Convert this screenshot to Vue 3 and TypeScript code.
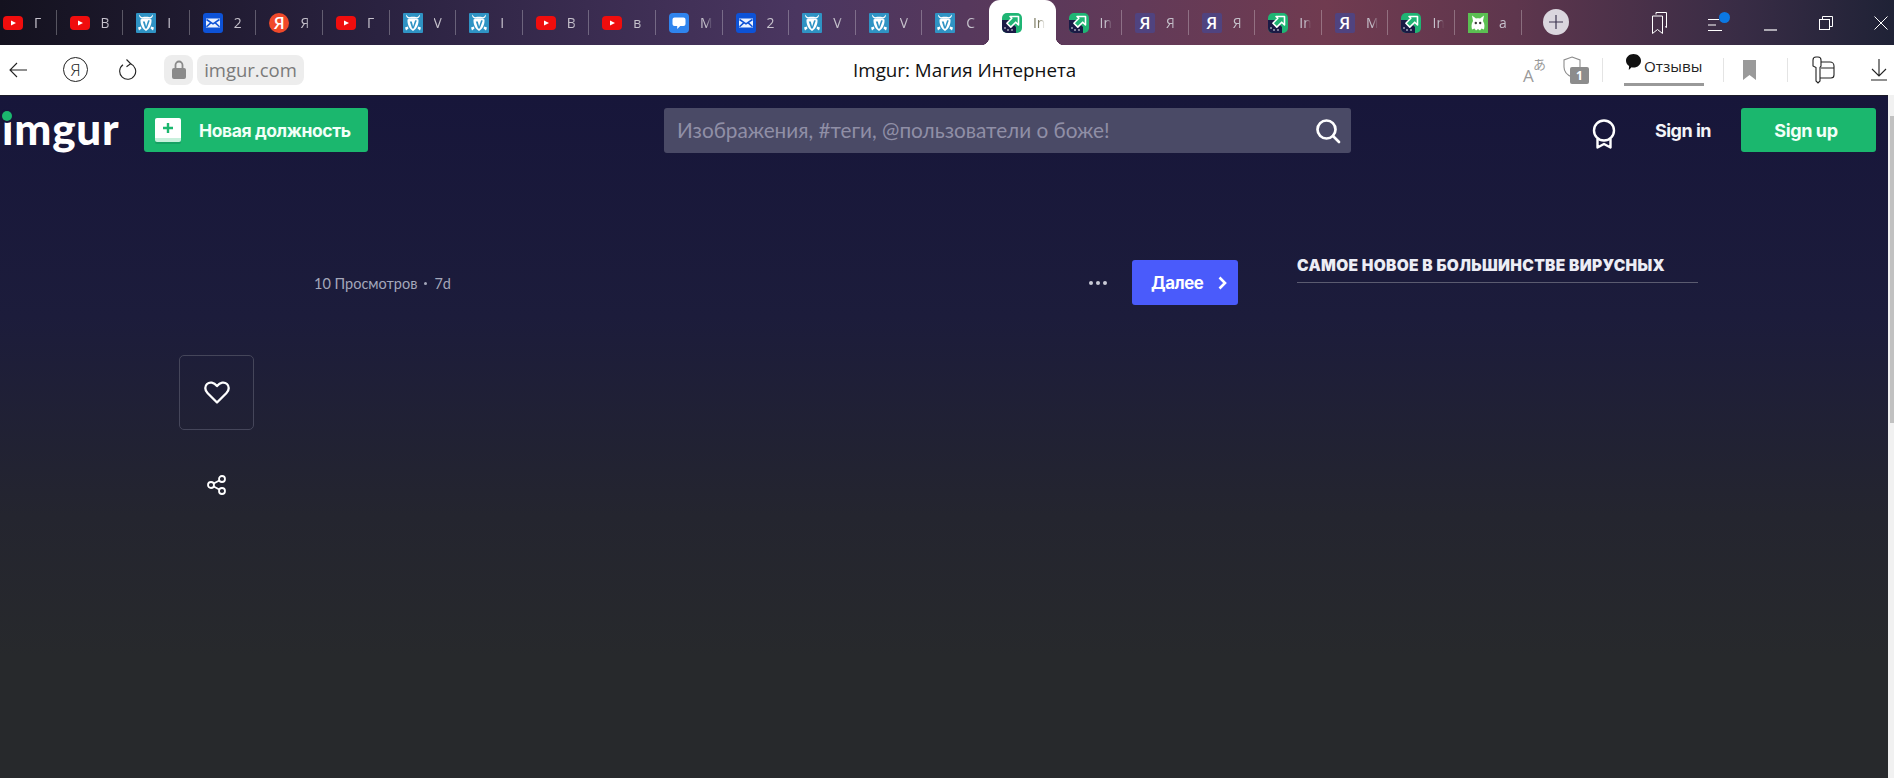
<template>
  <div class="window">
    <div class="tabbar">
      <div class="tabs">
        <div
          v-for="(tab, i) in tabs"
          :key="i"
          class="tab"
          :class="{ active: i === activeTab, 'no-sep': i === activeTab - 1 || i === activeTab }"
        >
          <svg v-if="tab.kind === 'yt'" class="fav" viewBox="0 0 20 20">
            <rect x="0" y="3" width="20" height="14" rx="4" fill="#f00d0d" />
            <path d="M8 7.4 13 10l-5 2.6z" fill="#fff" />
          </svg>
          <svg v-else-if="tab.kind === 'bull'" class="fav" viewBox="0 0 20 20">
            <rect width="20" height="20" rx="1" fill="#2f93c4" />
            <path d="M3 1.5c0 2.500 1 3.500 3 4.200 2.500-1 5.500-1 8 0 2-.7 3-1.700 3-4.200l-2 2.200c-.7.4-1.200.6-2 .4-1.300-.5-4.700-.5-6 0-.8.2-1.300 0-2-.4z" fill="#fff" />
            <path d="M4.500 6.500c3-1.600 8-1.600 11 0 .4 4.500-1.800 9.500-5.500 11.500-3.700-2-5.900-7-5.500-11.500z" fill="#fff" />
            <path d="M6.800 8.500h2l1.300 5 2-6.300 1.700.4-3 8h-1.700z" fill="#2f93c4" />
            <path d="M2 14.500l2.800-1 .7 2-2.500 2zM18 14.500l-2.800-1-.7 2 2.500 2z" fill="#fff" />
          </svg>
          <svg v-else-if="tab.kind === 'mail'" class="fav" viewBox="0 0 20 20">
            <rect width="20" height="20" rx="3" fill="#0d52d6" />
            <rect x="3" y="5.500" width="14" height="9" fill="#e9f1ff" />
            <path d="M3.500 6.500 10 10.800l6.500-4.300M3.500 13.800 8 9.600M16.500 13.800 12 9.600" fill="none" stroke="#0d52d6" stroke-width="1.500" />
          </svg>
          <span v-else-if="tab.kind === 'ya'" class="fav ya-round">Я</span>
          <span v-else-if="tab.kind === 'yaq'" class="fav ya-square">Я</span>
          <svg v-else-if="tab.kind === 'msg'" class="fav" viewBox="0 0 20 20">
            <rect width="20" height="20" rx="4" fill="#2f84ee" />
            <path d="M5.500 4.500h9a2 2 0 0 1 2 2v4.500a2 2 0 0 1-2 2h-3.300l-3 3v-3H5.500a2 2 0 0 1-2-2V6.500a2 2 0 0 1 2-2z" fill="#fff" />
          </svg>
          <svg v-else-if="tab.kind === 'imgur'" class="fav" viewBox="0 0 20 20">
            <rect width="20" height="20" rx="5" fill="#1fb574" />
            <path d="M0 7 7 7 14 14 14 20H5a5 5 0 0 1-5-5z" fill="#1a1a45" />
            <path d="M8 3.500h8.500V12l-2.800-2.800-4.900 4.900-3.900-3.900 4.900-4.900z" fill="#1fb574" stroke="#fff" stroke-width="1.600" stroke-linejoin="round" />
            <circle cx="3" cy="15" r=".8" fill="#fff" />
            <circle cx="6" cy="17" r=".8" fill="#fff" />
            <circle cx="10" cy="17" r=".8" fill="#fff" />
          </svg>
          <svg v-else class="fav" viewBox="0 0 20 20">
            <rect width="20" height="20" fill="#5bbf52" />
            <path d="M5 8 4 2.500 8 5.500c1.300-.4 2.700-.4 4 0l4-3L15 8c2 3 1.500 6 1 8.500l-2.500-1-1.500 2-2-1.500-2 1.500-1.500-2-2.500 1C3.500 14 3 11 5 8z" fill="#fff" />
            <circle cx="7.800" cy="10" r="1.200" fill="#3a3a3a" />
            <circle cx="12.200" cy="10" r="1.200" fill="#3a3a3a" />
          </svg>
          <span class="tab-label">{{ tab.label }}</span>
        </div>
      </div>

      <button class="new-tab">
        <svg width="16" height="16" viewBox="0 0 16 16"><path d="M8 1v14M1 8h14" stroke="#3c3550" stroke-width="1.200" /></svg>
      </button>

      <div class="win-controls">
        <svg class="ctl-collections" width="17" height="24" viewBox="0 0 17 24" fill="none" stroke="#fff" stroke-width="1">
          <path d="M5 3.500V1.500h10.500v15L14 15.500" />
          <path d="M1.500 5h10v17.500l-5-4-5 4z" />
        </svg>
        <div class="ctl-menu">
          <svg width="16" height="14" viewBox="0 0 16 14" stroke="#fff" stroke-width="1"><path d="M0 1.500h11M0 7h8M0 12.500h14" /></svg>
          <span class="menu-dot"></span>
        </div>
        <svg class="ctl-min" width="13" height="10" viewBox="0 0 13 10" stroke="#fff" stroke-width="1.200"><path d="M0 9h13" /></svg>
        <svg class="ctl-restore" width="14" height="14" viewBox="0 0 14 14" fill="none" stroke="#fff" stroke-width="1">
          <path d="M3.500 3V.5h10v10H11" />
          <rect x=".5" y="3.500" width="10" height="10" />
        </svg>
        <svg class="ctl-close" width="14" height="14" viewBox="0 0 14 14" stroke="#fff" stroke-width="1"><path d="M.5.5l13 13M13.500.5l-13 13" /></svg>
      </div>
    </div>

    <div class="toolbar">
      <svg class="tb-back" width="18" height="16" viewBox="0 0 18 16" fill="none" stroke="#222" stroke-width="1.100"><path d="M18 8H1M8 1 1 8l7 7" /></svg>
      <span class="tb-ya">Я</span>
      <svg class="tb-reload" width="18" height="24" viewBox="0 0 18 24" fill="none" stroke="#222" stroke-width="1.100">
        <path d="M11.500 5.800a8 8 0 1 1-7.500 1" />
        <path d="M7.500 1.500l4.200 4.300-4.200 3" />
      </svg>
      <div class="lock-pill">
        <svg width="14" height="19" viewBox="0 0 14 19"><path d="M3.500 8V5a3.500 3.500 0 0 1 7 0v3" fill="none" stroke="#8a8a8a" stroke-width="1.800" /><rect y="8" width="14" height="11" rx="2" fill="#8a8a8a" /></svg>
      </div>
      <div class="url-pill">imgur.com</div>
      <div class="page-title">Imgur: Магия Интернета</div>

      <div class="tb-right">
        <div class="translate"><span class="tr-a">A</span><span class="tr-jp">あ</span></div>
        <div class="shield">
          <svg width="18" height="24" viewBox="0 0 18 24" fill="none" stroke="#8c8c8c" stroke-width="1.100"><path d="M9 1l8 3v7c0 4-3 8-8 10-5-2-8-6-8-10V4z" /></svg>
          <span class="shield-badge">1</span>
        </div>
        <span class="tb-sep sep-a"></span>
        <div class="reviews">
          <svg width="15" height="17" viewBox="0 0 15 17"><path d="M7.500 0C11.700 0 15 2.900 15 6.700c0 3.800-3.300 6.800-7.500 6.800-.7 0-1.300-.1-1.900-.2L2.800 16l.3-4C1.200 10.800 0 8.900 0 6.700 0 2.900 3.300 0 7.500 0z" fill="#111" /></svg>
          <span>Отзывы</span>
        </div>
        <span class="tb-sep sep-b"></span>
        <svg class="tb-mark" width="13" height="20" viewBox="0 0 13 20"><path d="M0 0h13v20l-6.500-5L0 20z" fill="#9a9a9a" /></svg>
        <span class="tb-sep sep-c"></span>
        <svg class="tb-key" width="23" height="28" viewBox="0 0 23 28" fill="none" stroke="#222" stroke-width="1.100">
          <path d="M1 4a3 3 0 0 1 3-3h2a3 3 0 0 1 3 3v6l-1 1.500V25l-2 2-2-2V11.500L1 10z" />
          <path d="M9 6h9a4 4 0 0 1 4 4v9a3 3 0 0 1-3 3H8M9 12h13" />
        </svg>
        <svg class="tb-down" width="16" height="22" viewBox="0 0 16 22" fill="none" stroke="#222" stroke-width="1.100"><path d="M8 0v17M1 10l7 7 7-7M0 21h16" /></svg>
      </div>
    </div>

    <div class="viewport">
      <div class="page">
        <header class="nav">
          <div class="logo">imgur<span class="logo-dot"></span></div>
          <button class="new-post">
            <span class="plus-box">
              <svg width="10" height="10" viewBox="0 0 10 10"><path d="M5 0v10M0 5h10" stroke="#1bb76e" stroke-width="2.400" /></svg>
            </span>
            Новая должность
          </button>
          <div class="search">
            <span class="search-text">Изображения, #теги, @пользователи о боже!</span>
            <svg width="26" height="26" viewBox="0 0 26 26" fill="none" stroke="#fff" stroke-width="2.700" stroke-linecap="round"><circle cx="11.500" cy="11.500" r="9" /><path d="M18 18l6 6" /></svg>
          </div>
          <div class="nav-right">
            <svg width="24" height="30" viewBox="0 0 24 30" fill="none" stroke="#fff" stroke-width="2.400" stroke-linejoin="round">
              <circle cx="12" cy="11.500" r="10" />
              <path d="M5.500 20v8.500l6.500-3.500 6.500 3.500V20" />
            </svg>
            <span class="sign-in">Sign in</span>
            <button class="sign-up">Sign up</button>
          </div>
        </header>

        <main class="content">
          <aside class="rail">
            <div class="like">
              <svg width="26" height="23" viewBox="0 0 26 23" fill="none" stroke="#fff" stroke-width="2.300" stroke-linejoin="round"><path d="M13 21.500 3.500 12C.5 9 .8 5 3 3c2.600-2.300 6.800-1.800 10 2 3.200-3.800 7.400-4.300 10-2 2.200 2 2.500 6 -.5 9z" /></svg>
            </div>
            <svg class="share" width="19" height="20" viewBox="0 0 19 20" fill="none" stroke="#fff" stroke-width="1.800"><circle cx="4" cy="10" r="3" /><circle cx="15" cy="4" r="3" /><circle cx="15" cy="16" r="3" /><path d="M6.700 8.500l5.600-3M6.700 11.500l5.600 3" /></svg>
          </aside>

          <section class="post-head">
            <div class="meta">
              <span>10 Просмотров</span>
              <span class="meta-dot"></span>
              <span>7d</span>
            </div>
            <div class="post-actions">
              <span class="more"><i></i><i></i><i></i></span>
              <button class="next">
                Далее
                <svg width="9" height="14" viewBox="0 0 9 14" fill="none" stroke="#fff" stroke-width="2.600"><path d="M1.500 1.500 7 7l-5.500 5.500" /></svg>
              </button>
            </div>
          </section>

          <aside class="side">
            <h2>Самое новое в большинстве вирусных</h2>
          </aside>
        </main>
      </div>
      <div class="scrollbar"><div class="thumb"></div></div>
    </div>
  </div>
</template>

<script setup lang="ts">
type TabKind = 'yt' | 'bull' | 'mail' | 'ya' | 'yaq' | 'msg' | 'imgur' | 'pet'

interface Tab {
  kind: TabKind
  label: string
}

const activeTab = 15

const tabs: Tab[] = [
  { kind: 'yt', label: 'Г' },
  { kind: 'yt', label: 'В' },
  { kind: 'bull', label: 'I' },
  { kind: 'mail', label: '2' },
  { kind: 'ya', label: 'Я' },
  { kind: 'yt', label: 'Г' },
  { kind: 'bull', label: 'V' },
  { kind: 'bull', label: 'I' },
  { kind: 'yt', label: 'В' },
  { kind: 'yt', label: 'в' },
  { kind: 'msg', label: 'М' },
  { kind: 'mail', label: '2' },
  { kind: 'bull', label: 'V' },
  { kind: 'bull', label: 'V' },
  { kind: 'bull', label: 'С' },
  { kind: 'imgur', label: 'In' },
  { kind: 'imgur', label: 'In' },
  { kind: 'yaq', label: 'Я' },
  { kind: 'yaq', label: 'Я' },
  { kind: 'imgur', label: 'In' },
  { kind: 'yaq', label: 'М' },
  { kind: 'imgur', label: 'In' },
  { kind: 'pet', label: 'а' },
]
</script>

<style>
html,
body {
  margin: 0;
  overflow: hidden;
}
</style>

<style scoped>
.window {
  width: 1894px;
  height: 778px;
  display: flex;
  flex-direction: column;
  overflow: hidden;
  font-family: "Open Sans", sans-serif;
}

button {
  border: 0;
  font: inherit;
  padding: 0;
}

/* tab strip */
.tabbar {
  height: 45px;
  flex: none;
  display: flex;
  align-items: center;
  background: linear-gradient(90deg, #14121f 0%, #2a2240 20%, #4a3660 42%, #623a58 60%, #703b50 70%, #5e364d 80%, #382c45 92%, #1f2236 100%);
}

.tabs {
  display: flex;
  height: 45px;
  margin-left: -10px;
  flex: none;
}

.tab {
  width: 66.6px;
  height: 45px;
  box-sizing: border-box;
  padding-left: 13px;
  display: flex;
  align-items: center;
  gap: 11px;
  position: relative;
  flex: none;
}

.tab::after {
  content: "";
  position: absolute;
  right: 0;
  top: 10px;
  height: 25px;
  width: 1px;
  background: rgba(255, 255, 255, 0.28);
}

.tab.no-sep::after {
  display: none;
}

.tab.active {
  background: #fff;
  border-radius: 11px 11px 0 0;
}

.tab.active .tab-label {
  color: #7c7a62;
}

.tab.active::before {
  content: "";
  position: absolute;
  left: -8px;
  right: -8px;
  bottom: 0;
  height: 8px;
  background:
    radial-gradient(circle at 0 0, transparent 8px, #fff 8.500px) left / 8px 8px no-repeat,
    radial-gradient(circle at 100% 0, transparent 8px, #fff 8.500px) right / 8px 8px no-repeat;
}

.fav {
  width: 20px;
  height: 20px;
  flex: none;
  display: block;
}

.ya-round,
.ya-square {
  color: #fff;
  font-size: 17px;
  font-weight: 600;
  line-height: 20px;
  text-align: center;
}

.ya-round {
  background: #f0492a;
  border-radius: 50%;
}

.ya-square {
  background: #50437f;
  border-radius: 2px;
}

.tab-label {
  width: 12px;
  overflow: hidden;
  white-space: nowrap;
  font-size: 14px;
  color: #c6c2cc;
  -webkit-mask-image: linear-gradient(90deg, #000 50%, transparent 100%);
  mask-image: linear-gradient(90deg, #000 50%, transparent 100%);
}

.new-tab {
  width: 26px;
  height: 26px;
  margin: 0 0 2px 21px;
  border-radius: 50%;
  background: #dad6de;
  display: flex;
  align-items: center;
  justify-content: center;
  flex: none;
}

.win-controls {
  display: flex;
  align-items: center;
  flex: none;
}

.ctl-collections {
  margin-left: 82px;
}

.ctl-menu {
  margin-left: 40px;
  width: 24px;
  height: 24px;
  position: relative;
  display: flex;
  align-items: center;
}

.ctl-menu svg {
  margin-top: 4px;
}

.menu-dot {
  position: absolute;
  left: 11px;
  top: 1px;
  width: 11px;
  height: 11px;
  border-radius: 50%;
  background: #0b78e3;
}

.ctl-min {
  margin: 6px 0 0 32px;
}

.ctl-restore {
  margin: 0 0 0 42px;
}

.ctl-close {
  margin-left: 41px;
}

/* address bar */
.toolbar {
  height: 50px;
  flex: none;
  background: #fff;
  display: flex;
  align-items: center;
  padding-bottom: 1px;
  box-sizing: border-box;
}

.tb-back {
  margin-left: 9px;
}

.tb-ya {
  width: 23px;
  height: 23px;
  margin-left: 36px;
  border: 1.200px solid #222;
  border-radius: 50%;
  font-size: 17px;
  font-weight: 300;
  line-height: 23px;
  text-align: center;
  color: #222;
}

.tb-reload {
  margin-left: 31px;
}

.lock-pill {
  width: 29px;
  height: 30px;
  margin-left: 27px;
  background: #ededed;
  border-radius: 8px;
  display: flex;
  align-items: center;
  justify-content: center;
}

.url-pill {
  width: 107px;
  height: 30px;
  margin-left: 4px;
  background: #ededed;
  border-radius: 8px;
  font-size: 18.500px;
  line-height: 29px;
  color: #7a7a7a;
  text-align: center;
  flex: none;
}

.page-title {
  margin-left: 549px;
  font-size: 18.800px;
  color: #111;
  white-space: nowrap;
}

.tb-right {
  margin-left: auto;
  display: flex;
  align-items: center;
  padding-right: 7px;
}

.translate {
  width: 23px;
  height: 28px;
  display: flex;
  justify-content: space-between;
  color: #9a9a9a;
}

.tr-a {
  font-size: 17px;
  line-height: 17px;
  align-self: flex-end;
}

.tr-jp {
  font-family: "Noto Sans CJK JP", sans-serif;
  font-size: 13px;
  line-height: 15px;
  margin-left: -2px;
}

.shield {
  position: relative;
  margin-left: 17px;
  width: 26px;
  height: 28px;
}

.shield-badge {
  position: absolute;
  right: 0;
  bottom: 0;
  width: 19px;
  height: 17px;
  background: #8c8c8c;
  border-radius: 2px;
  color: #fff;
  font-size: 12px;
  font-weight: 700;
  line-height: 17px;
  text-align: center;
}

.tb-sep {
  width: 1px;
  height: 24px;
  background: #e4e4e4;
}

.sep-a {
  margin-left: 13px;
}

.reviews {
  margin-left: 21px;
  width: 80px;
  height: 32px;
  box-sizing: border-box;
  padding-left: 2px;
  border-bottom: 3px solid #999;
  display: flex;
  gap: 3px;
  font-size: 15.200px;
  color: #222;
  line-height: 24px;
}

.sep-b {
  margin-left: 19px;
}

.tb-mark {
  margin-left: 19px;
}

.sep-c {
  margin-left: 31px;
}

.tb-key {
  margin-left: 24px;
}

.tb-down {
  margin-left: 36px;
}

/* page */
.viewport {
  flex: 1;
  display: flex;
  min-height: 0;
}

.page {
  flex: 1;
  background: linear-gradient(180deg, #17163a 0, #1c1c3b 220px, #24252f 420px, #27292c 560px);
  border-top: 1px solid #1c1b28;
  box-sizing: border-box;
}

.scrollbar {
  width: 6px;
  flex: none;
  background: #f1f1f1;
  padding: 21px 0 0 2px;
  box-sizing: border-box;
}

.thumb {
  height: 307px;
  background: #c1c1c1;
}

.nav {
  display: flex;
  align-items: flex-start;
  padding: 12px 12px 0 2px;
}

.logo {
  position: relative;
  width: 122px;
  height: 44px;
  font-family: Lato, sans-serif;
  font-weight: 900;
  font-size: 44px;
  line-height: 40px;
  letter-spacing: 0.8px;
  color: #fff;
}

.logo-dot {
  position: absolute;
  left: 0;
  top: 3px;
  width: 10px;
  height: 10px;
  border-radius: 50%;
  background: #1bb76e;
  box-shadow: 0 0 0 2px #17163a;
}

.new-post {
  width: 224px;
  height: 44px;
  margin-left: 20px;
  box-sizing: border-box;
  padding-left: 11px;
  display: flex;
  align-items: center;
  gap: 18px;
  background: #1bb76e;
  border-radius: 3px;
  color: #f2fff8;
  font-family: Inter, sans-serif;
  font-weight: 700;
  font-size: 17.500px;
  letter-spacing: -0.4px;
  white-space: nowrap;
}

.plus-box {
  width: 26px;
  height: 24px;
  background: #fff;
  border-bottom: 4px solid #c8f0dc;
  box-sizing: border-box;
  border-radius: 2px;
  display: flex;
  align-items: center;
  justify-content: center;
  box-shadow: 0 2px 0 #17a163;
}

.search {
  width: 687px;
  height: 45px;
  margin-left: 296px;
  box-sizing: border-box;
  padding: 0 10px 0 13px;
  display: flex;
  align-items: center;
  justify-content: space-between;
  background: #4a4a66;
  border-radius: 3px;
}

.search-text {
  font-family: Lato, sans-serif;
  font-size: 20.750px;
  line-height: 22px;
  margin-top: -2px;
  color: #908fa6;
  white-space: nowrap;
}

.nav-right {
  margin-left: auto;
  display: flex;
  align-items: center;
  height: 44px;
}

.nav-right > svg {
  margin: 7px 0 0 0;
}

.sign-in {
  margin-left: 39px;
  font-family: Inter, sans-serif;
  font-weight: 700;
  font-size: 18px;
  letter-spacing: -0.5px;
  color: #f4f4f8;
  white-space: nowrap;
}

.sign-up {
  width: 135px;
  height: 44px;
  margin-left: 30px;
  padding-right: 5px;
  background: #1bb76e;
  border-radius: 3px;
  color: #f2fff8;
  font-family: Inter, sans-serif;
  font-weight: 700;
  font-size: 18px;
  letter-spacing: -0.4px;
}

.content {
  display: flex;
  align-items: flex-start;
  padding: 107px 0 0 179px;
}

.rail {
  width: 75px;
  margin-top: 95px;
  flex: none;
  display: flex;
  flex-direction: column;
  align-items: center;
}

.like {
  width: 75px;
  height: 75px;
  box-sizing: border-box;
  border: 1px solid #45465a;
  border-radius: 5px;
  display: flex;
  align-items: center;
  justify-content: center;
}

.share {
  margin-top: 45px;
}

.post-head {
  width: 924px;
  height: 45px;
  margin-left: 60px;
  flex: none;
  display: flex;
  align-items: center;
  justify-content: space-between;
}

.meta {
  display: flex;
  align-items: center;
  gap: 7px;
  font-family: Lato, sans-serif;
  font-size: 14.500px;
  margin-top: 2px;
  color: #a4a7ba;
}

.meta-dot {
  width: 3px;
  height: 3px;
  border-radius: 50%;
  background: #a4a7ba;
}

.post-actions {
  display: flex;
  align-items: center;
  gap: 25px;
}

.more {
  display: flex;
  gap: 3px;
}

.more i {
  width: 4px;
  height: 4px;
  border-radius: 50%;
  background: #c9cad6;
}

.next {
  width: 106px;
  height: 45px;
  box-sizing: border-box;
  padding: 0 11px 0 19px;
  display: flex;
  align-items: center;
  justify-content: space-between;
  background: #4a5bfb;
  border-radius: 3px;
  color: #fff;
  font-family: Inter, sans-serif;
  font-weight: 700;
  font-size: 16.800px;
  letter-spacing: -0.4px;
}

.side {
  width: 400px;
  margin-left: 60px;
  flex: none;
}

.side h2 {
  margin: -3px 0 0 -1px;
  padding-bottom: 7px;
  border-bottom: 1px solid #5b5b70;
  font-family: Inter, sans-serif;
  font-weight: 900;
  font-size: 15.500px;
  line-height: 18px;
  letter-spacing: 0.33px;
  text-transform: uppercase;
  color: #ecedf5;
  white-space: nowrap;
}
</style>
